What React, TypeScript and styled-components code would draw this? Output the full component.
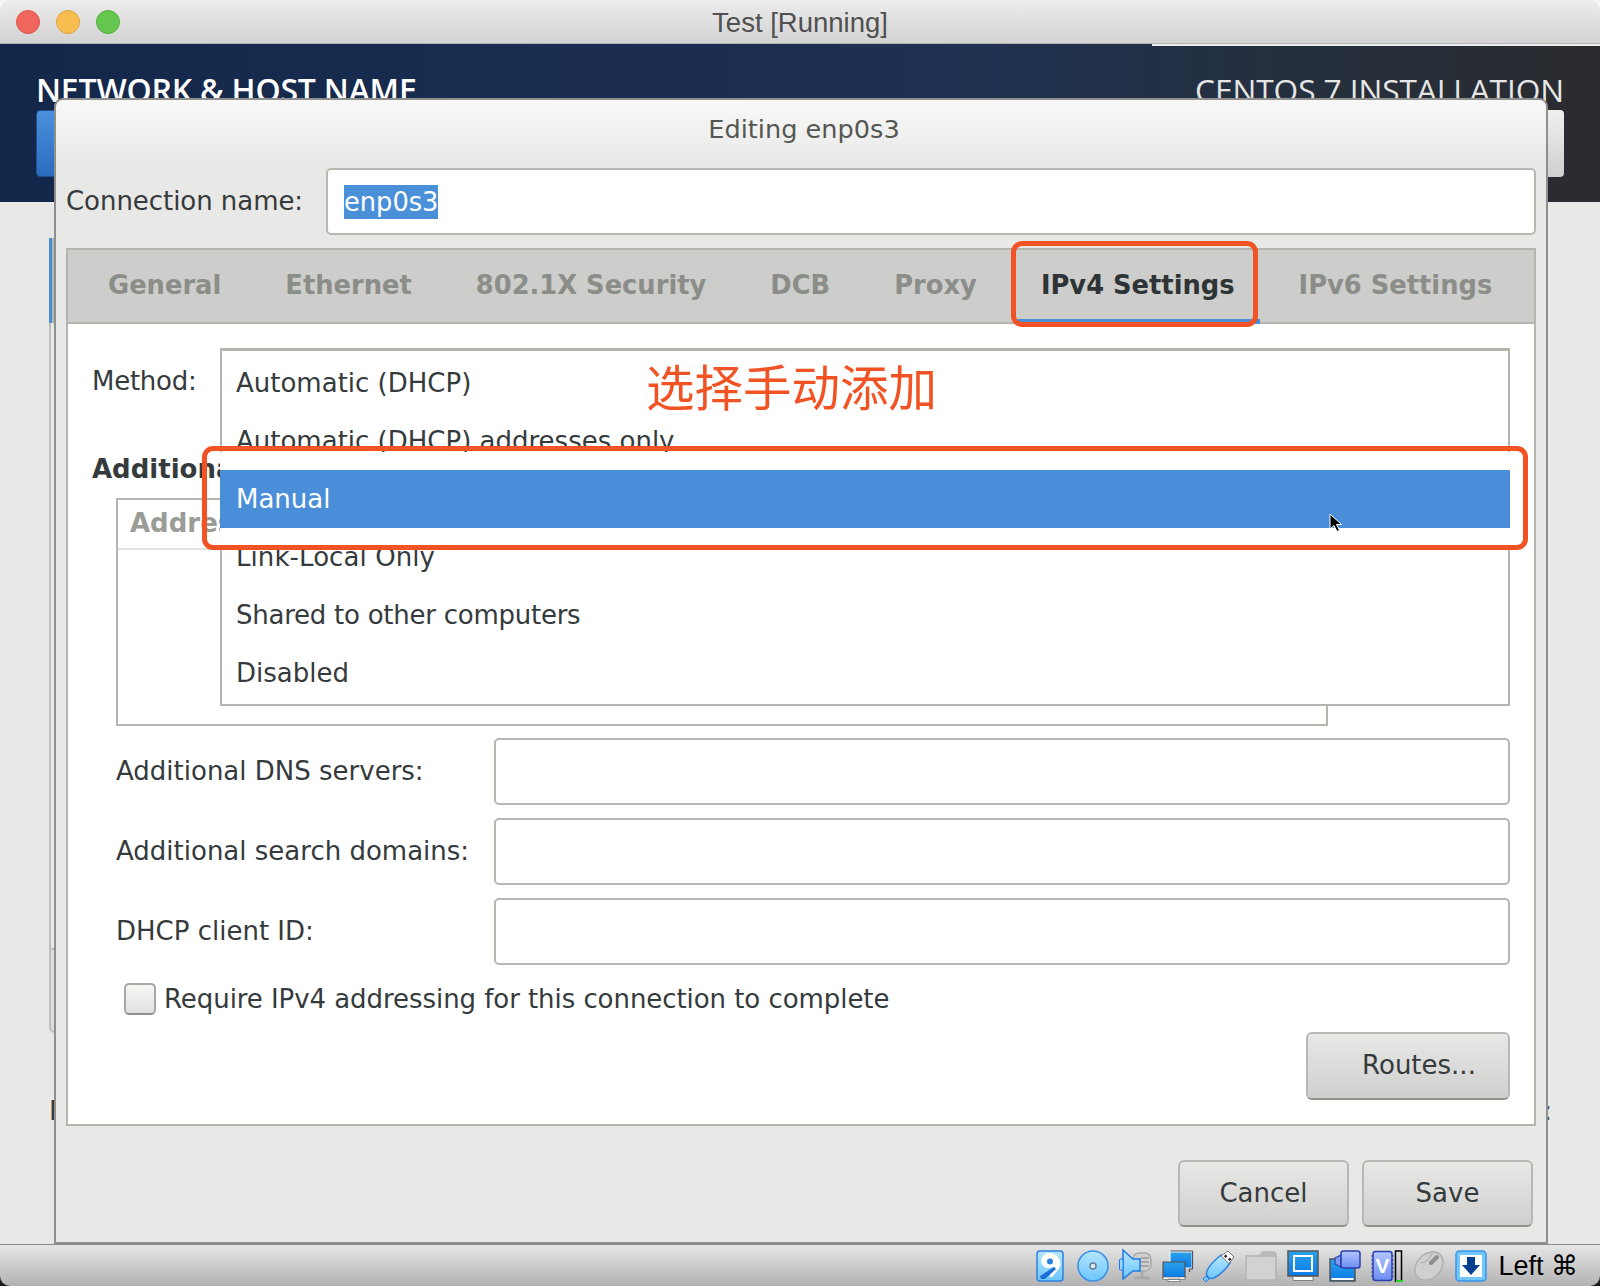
import React from "react";
import styled, { createGlobalStyle } from "styled-components";

const Global = createGlobalStyle`
  html, body { margin: 0; padding: 0; background: #fff; }
  #root { width: 1600px; height: 1286px; }
`;

const UI = `"DejaVu Sans", "Noto Sans", sans-serif`;
const INK = "#353a3c";

const Corners = styled.div`
  width: 1600px;
  height: 1286px;
  position: relative;
  overflow: hidden;
  background: linear-gradient(#f6f6f6 50%, #1c1c1c 50%);
`;
const Frame = styled.div`
  height: 100%;
  border-radius: 10px;
  overflow: hidden;
  display: flex;
  flex-direction: column;
`;
const WindowBar = styled.header`
  height: 44px;
  flex: none;
  box-sizing: border-box;
  position: relative;
  display: flex;
  align-items: center;
  justify-content: center;
  background: linear-gradient(#ececec, #d3d3d3);
  border-bottom: 1px solid #b4b4b4;
`;
const Lights = styled.div`
  position: absolute;
  left: 16px;
  top: 10px;
  display: flex;
  gap: 16px;
`;
const Light = styled.span<{ $fill: string; $edge: string }>`
  width: 24px;
  height: 24px;
  border-radius: 50%;
  box-sizing: border-box;
  background: ${(p) => p.$fill};
  border: 1px solid ${(p) => p.$edge};
`;
const WindowTitle = styled.div`
  font: 27.5px/30px "Liberation Sans", sans-serif;
  color: #505050;
  position: relative;
  top: 1px;
`;
const Desktop = styled.main`
  flex: 1;
  min-height: 0;
  position: relative;
  display: flex;
  flex-direction: column;
  background: #e8e8e7;
`;
const InstallerHeader = styled.div`
  height: 158px;
  flex: none;
  box-sizing: border-box;
  position: relative;
  padding: 28px 36px 0 36px;
  background: linear-gradient(90deg, #13274a 0%, #182c50 30%, #1e3152 60%, #25303f 80%, #2a2b2e 100%);
  &::before {
    content: "";
    position: absolute;
    left: 1152px;
    right: 0;
    top: 0;
    height: 2px;
    background: #ececec;
  }
`;
const HeaderRow = styled.div`
  display: flex;
  justify-content: space-between;
  align-items: flex-start;
`;
const ScreenName = styled.div`
  font: 600 32px/36px "Open Sans", sans-serif;
  color: #fff;
  letter-spacing: -0.2px;
`;
const ProductName = styled.div`
  font: 400 31.7px/36px "Open Sans", sans-serif;
  color: #e6e6e6;
  letter-spacing: -0.1px;
`;
const HeaderButtons = styled(HeaderRow)`
  margin-top: 2px;
`;
const DoneButton = styled.div`
  width: 100px;
  height: 67px;
  box-sizing: border-box;
  border-radius: 4px;
  background: linear-gradient(#4a90dc, #2a6dbd);
  border: 1px solid #1d4f8e;
`;
const KeyboardButton = styled.div`
  width: 120px;
  height: 67px;
  box-sizing: border-box;
  border-radius: 4px;
  background: linear-gradient(#f0f0ef, #cfcfcd);
`;
const BackPanel = styled.div`
  flex: 1;
  display: flex;
  flex-direction: column;
  padding: 36px 48px 0 49px;
`;
const BackSelected = styled.div`
  height: 85px;
  width: 6px;
  box-sizing: border-box;
  border-left: 3px solid #4a8dd8;
  border-right: 3px solid #b5b5b0;
`;
const BackLine = styled.div`
  height: 625px;
  width: 6px;
  box-sizing: border-box;
  border-left: 2px solid #bdbdb9;
`;
const BackBox = styled.div`
  height: 85px;
  width: 12px;
  box-sizing: border-box;
  border: 2px solid #bdbdb9;
  border-radius: 0 0 0 6px;
  background: #dededc;
`;
const BackFooter = styled.div`
  margin-top: 65px;
  display: flex;
  justify-content: space-between;
  font: 26px/26px ${UI};
  color: ${INK};
`;
const Dialog = styled.section`
  position: absolute;
  left: 54px;
  top: 54px;
  width: 1494px;
  height: 1146px;
  box-sizing: border-box;
  border: 2px solid #8f8f8d;
  border-radius: 9px 9px 0 0;
  background: #e8e8e7;
  display: flex;
  flex-direction: column;
  font-family: ${UI};
  color: ${INK};
`;
const DialogTitle = styled.div`
  height: 68px;
  flex: none;
  box-sizing: border-box;
  padding: 11px 0 0 6px;
  text-align: center;
  font-size: 25.6px;
  line-height: 36px;
  color: #555753;
  border-radius: 7px 7px 0 0;
  background: linear-gradient(#f8f8f8, #e8e8e7);
`;
const ConnectionRow = styled.div`
  display: flex;
  align-items: center;
  padding: 0 10px 0 10px;
`;
const ConnectionLabel = styled.label`
  width: 260px;
  flex: none;
  font-size: 26px;
  line-height: 34px;
  letter-spacing: -0.05px;
  margin-top: -2px;
`;
const Entry = styled.div`
  flex: 1;
  height: 67px;
  box-sizing: border-box;
  background: #fff;
  border: 2px solid #b8b8b3;
  border-radius: 5px;
  display: flex;
  align-items: center;
  padding-left: 16px;
  font-size: 25.7px;
`;
const Selected = styled.span`
  background: #4a90d9;
  color: #fff;
  line-height: 34px;
`;
const Notebook = styled.div`
  margin: 13px 10px 0 10px;
  height: 878px;
  box-sizing: border-box;
  border: 2px solid #b5b5b0;
  background: #fff;
  display: flex;
  flex-direction: column;
`;
const TabStrip = styled.nav`
  height: 74px;
  flex: none;
  box-sizing: border-box;
  display: flex;
  padding-left: 8px;
  background: #cdcdcb;
  border-bottom: 2px solid #b5b5b0;
`;
const Tab = styled.div<{ $active?: boolean }>`
  position: relative;
  padding: 0 32px;
  font-size: 25.75px;
  font-weight: 700;
  line-height: 70px;
  color: ${(p) => (p.$active ? "#2e3436" : "#8b8d89")};
  white-space: nowrap;
  &::after {
    content: "";
    display: ${(p) => (p.$active ? "block" : "none")};
    position: absolute;
    left: 7px;
    right: 7px;
    bottom: -2px;
    height: 5px;
    background: #4a90d9;
  }
`;
const Pane = styled.div`
  flex: 1;
  position: relative;
  padding: 40px 24px 0 24px;
  display: flex;
  flex-direction: column;
  font-size: 26px;
  line-height: 34px;
`;
const MethodLabel = styled.div`
  letter-spacing: -0.25px;
`;
const SectionHeading = styled.div`
  margin-top: 54px;
  font-weight: 700;
`;
const AddressTable = styled.div`
  margin: 12px 0 -1px 24px;
  width: 1212px;
  height: 228px;
  box-sizing: border-box;
  border: 2px solid #b5b5b0;
`;
const TableHead = styled.div`
  height: 50px;
  box-sizing: border-box;
  padding: 6px 0 0 12px;
  font-weight: 700;
  color: #9a9c98;
  border-bottom: 2px solid #e3e3e1;
`;
const FieldRow = styled.div`
  margin: 13px 0 0 24px;
  display: flex;
  align-items: center;
  height: 67px;
`;
const FieldLabel = styled.label`
  width: 378px;
  flex: none;
  margin-top: -2px;
`;
const FieldEntry = styled(Entry)``;
const CheckRow = styled.div`
  margin: 17px 0 0 32px;
  display: flex;
  align-items: center;
  gap: 8px;
`;
const CheckText = styled.span`
  letter-spacing: -0.06px;
`;
const CheckBox = styled.span`
  width: 32px;
  height: 32px;
  box-sizing: border-box;
  border: 2px solid #a9a9a4;
  border-bottom-color: #8f8f8b;
  border-radius: 5px;
  background: linear-gradient(#f6f6f5, #e0e0de);
`;
const Button = styled.div<{ $shift?: number }>`
  width: 171px;
  height: 67px;
  box-sizing: border-box;
  border: 2px solid #b8b8b3;
  border-bottom-color: #92928d;
  border-radius: 6px;
  background: linear-gradient(#e8e8e7, #cfcfcd);
  display: flex;
  align-items: center;
  justify-content: center;
  padding: 0 0 2px ${(p) => p.$shift ?? 0}px;
  font-size: 26px;
  color: ${INK};
`;
const RoutesButton = styled(Button)`
  width: 204px;
  height: 68px;
  margin: 16px 0 0 auto;
`;
const DialogActions = styled.div`
  display: flex;
  justify-content: flex-end;
  gap: 13px;
  padding: 34px 13px 0 0;
`;
const Popup = styled.div`
  position: absolute;
  left: 152px;
  top: 24px;
  width: 1290px;
  height: 358px;
  box-sizing: border-box;
  padding-top: 3px;
  background: #fff;
  border: 2px solid #b5b5b0;
  border-top-width: 3px;
  display: flex;
  flex-direction: column;
`;
const PopupItem = styled.div<{ $track?: number }>`
  height: 58px;
  flex: none;
  box-sizing: border-box;
  padding-left: 14px;
  line-height: 58px;
  letter-spacing: ${(p) => p.$track ?? 0}px;
`;
const HighlightBand = styled.div`
  position: relative;
  z-index: 1;
  margin: -18px -2px -17px -2px;
  padding: 18px 0 17px;
  background: #fff;
`;
const HighlightItem = styled(PopupItem)`
  padding-left: 16px;
  background: #4a8dd8;
  color: #fff;
`;
const Cursor = styled.svg`
  position: absolute;
  left: 1109px;
  top: 61px;
`;
const RedBox = styled.div<{ $x: number; $y: number; $w: number; $h: number }>`
  position: absolute;
  left: ${(p) => p.$x}px;
  top: ${(p) => p.$y}px;
  width: ${(p) => p.$w}px;
  height: ${(p) => p.$h}px;
  box-sizing: border-box;
  border: 5px solid #f15325;
  border-radius: 11px;
`;
const Annotation = styled.div`
  position: absolute;
  left: 646px;
  top: 355px;
  font: 48.5px/60px "Noto Sans CJK SC", sans-serif;
  color: #f15325;
  white-space: nowrap;
`;
const StatusBar = styled.footer`
  height: 42px;
  flex: none;
  box-sizing: border-box;
  display: flex;
  align-items: center;
  justify-content: flex-end;
  gap: 10px;
  padding-right: 22px;
  background: linear-gradient(#e6e6e6, #b2b2b2);
  border-top: 1px solid #8a8a88;
`;
const HostKey = styled.div`
  margin-left: 1px;
  font: 27px/30px "Liberation Sans", "DejaVu Sans", sans-serif;
  color: #000;
  white-space: nowrap;
`;
const Icon = styled.svg`
  flex: none;
  display: block;
  overflow: visible;
`;
const ChipLetter = styled.text`
  font: 700 21px "Liberation Sans", sans-serif;
  fill: #fff;
`;

const IconDefs = () => (
  <svg width="0" height="0" style={{ position: "absolute" }}>
    <defs>
      <linearGradient id="lb" x1="0" y1="0" x2="0" y2="1">
        <stop offset="0" stopColor="#b5e6ff" />
        <stop offset="1" stopColor="#6cc6ff" />
      </linearGradient>
      <linearGradient id="mb" x1="0" y1="0" x2="0" y2="1">
        <stop offset="0" stopColor="#2aa2ea" />
        <stop offset="1" stopColor="#0a7ae8" />
      </linearGradient>
      <linearGradient id="pb" x1="0" y1="0" x2="0" y2="1">
        <stop offset="0" stopColor="#b3c6ff" />
        <stop offset="1" stopColor="#6d8df0" />
      </linearGradient>
    </defs>
  </svg>
);

const IconSet = () => (
  <>
    <Icon width="32" height="32" viewBox="0 0 32 32">
      <rect x="2" y="1" width="26" height="30" rx="3" fill="url(#lb)" stroke="#2f80e0" strokeWidth="1.5" />
      <path d="M15 3.500a10 10 0 0 1 9 15L17 27h-3l6-10-6 1a7.500 7.500 0 0 1-8-7 8.500 8.500 0 0 1 9-8z" fill="#fff" />
      <circle cx="15" cy="11.500" r="3" fill="#2c7fe0" />
      <path d="M5 26l14-9 2 2-11 10H6z" fill="#1d6fd6" />
    </Icon>
    <Icon width="32" height="32" viewBox="0 0 32 32">
      <circle cx="16" cy="16" r="15" fill="url(#lb)" stroke="#3a8fec" strokeWidth="1.5" />
      <circle cx="16" cy="16" r="3" fill="#d8ecf8" stroke="#6b7f8f" strokeWidth="1.500" />
    </Icon>
    <Icon width="32" height="32" viewBox="0 0 32 32">
      <rect x="14" y="3" width="18" height="18" rx="6" fill="#cfcfcf" stroke="#a8a8a8" strokeWidth="1.500" />
      <path d="M22 8h8M22 12h8M22 16h8" stroke="#9a9a9a" strokeWidth="1.500" />
      <path d="M23 21v6M15 28h16" stroke="#a8a8a8" strokeWidth="3" />
      <path d="M4 0l10 9h7v12h-7L4 29z" fill="url(#lb)" stroke="#1f7ae6" strokeWidth="1.500" />
      <rect x="0.500" y="9" width="3.500" height="11" rx="1" fill="#9ad8ff" stroke="#1f7ae6" />
    </Icon>
    <Icon width="32" height="32" viewBox="0 0 32 32">
      <path d="M9 2h22v16H9z" fill="url(#mb)" stroke="#fff" strokeWidth="1" />
      <path d="M9.500 1h22v18h-3v3" fill="none" stroke="#555" strokeWidth="1.200" />
      <path d="M2 12h22v16H2z" fill="url(#mb)" stroke="#555" strokeWidth="1.200" />
      <path d="M2 27h22v2.500H2zM7 29h12v2.500H7z" fill="#fff" stroke="#555" strokeWidth="0.600" />
    </Icon>
    <Icon width="32" height="32" viewBox="0 0 32 32">
      <path d="M4 21C6 15 13 9 18 5l9 8c-4 6-10 12-16 15-5 2-9-2-7-7z" fill="url(#lb)" stroke="#2f80e0" strokeWidth="1.500" />
      <path d="M18 6l7-5 6 6-5 6.500z" fill="#fff" stroke="#777" strokeWidth="1" />
      <rect x="21.500" y="5" width="2.500" height="2.500" fill="#222" transform="rotate(45 22.700 6.200)" />
      <rect x="25.500" y="8" width="2.500" height="2.500" fill="#222" transform="rotate(45 26.700 9.200)" />
      <path d="M3 26l3 3-3 3-3-3z" fill="#6cc6ff" stroke="#2f80e0" />
    </Icon>
    <Icon width="32" height="32" viewBox="0 0 32 32">
      <path d="M1 6h13l4-4h11l2 2v26H1z" fill="#d2d2d2" stroke="#b2b2b2" strokeWidth="1.500" />
      <path d="M14 6h17" stroke="#b2b2b2" strokeWidth="1.500" />
      <path d="M18 2h11l2 4H14z" fill="#b9b9b9" />
    </Icon>
    <Icon width="32" height="32" viewBox="0 0 32 32">
      <rect x="1" y="1" width="30" height="25" fill="url(#mb)" stroke="#555" strokeWidth="1.500" />
      <rect x="7" y="6" width="18" height="15" fill="none" stroke="#fff" strokeWidth="2" />
      <path d="M6 26.500h20v4H6z" fill="#fff" stroke="#666" strokeWidth="0.800" />
    </Icon>
    <Icon width="32" height="32" viewBox="0 0 32 32">
      <rect x="1" y="9" width="25" height="22" fill="url(#mb)" stroke="#555" strokeWidth="1.500" />
      <rect x="2.500" y="28" width="22" height="2" fill="#fff" />
      <path d="M6 8l6-3v12l-6-3z" fill="#7f9cf4" stroke="#2b3fb0" strokeWidth="1.200" />
      <rect x="12" y="1" width="19" height="17" rx="2.500" fill="url(#pb)" stroke="#2b3fb0" strokeWidth="1.500" />
    </Icon>
    <Icon width="32" height="32" viewBox="0 0 32 32">
      <rect x="2" y="1.500" width="19" height="29" rx="2.500" fill="url(#pb)" stroke="#2b3fb0" strokeWidth="1.500" />
      <ChipLetter x="11.500" y="23" textAnchor="middle">V</ChipLetter>
      <path d="M21.500 5v22M1.500 5v22" stroke="#3a50c0" strokeWidth="2" strokeDasharray="2 2" />
      <rect x="24.500" y="1" width="6" height="30" fill="none" stroke="#000" strokeWidth="1.500" />
      <rect x="25" y="30" width="7" height="2" fill="#22d322" />
    </Icon>
    <Icon width="32" height="32" viewBox="0 0 32 32">
      <ellipse cx="16" cy="16" rx="12" ry="16" transform="rotate(45 16 16)" fill="#d0d0d0" stroke="#b0b0b0" strokeWidth="1.500" />
      <path d="M7 13c5 0 10-4 12-10" fill="none" stroke="#b0b0b0" strokeWidth="1.200" />
      <path d="M18 13l6-6" stroke="#8e8e8e" strokeWidth="4" strokeLinecap="round" />
    </Icon>
    <Icon width="32" height="32" viewBox="0 0 32 32">
      <rect x="1" y="1" width="30" height="30" rx="3.500" fill="#72c8fb" stroke="#3a94ea" strokeWidth="1.500" />
      <rect x="5" y="5" width="22" height="22" fill="#fff" />
      <path d="M12 7h8v8h5l-9 10-9-10h5z" fill="#053f8f" />
    </Icon>
  </>
);

export default function App() {
  return (
    <>
      <Global />
      <IconDefs />
      <Corners>
        <Frame>
          <WindowBar>
            <Lights>
              <Light $fill="#f0665c" $edge="#dd5348" />
              <Light $fill="#f7be4f" $edge="#dfa23a" />
              <Light $fill="#64c64f" $edge="#50ad3d" />
            </Lights>
            <WindowTitle>Test [Running]</WindowTitle>
          </WindowBar>
          <Desktop>
            <InstallerHeader>
              <HeaderRow>
                <ScreenName>NETWORK &amp; HOST NAME</ScreenName>
                <ProductName>CENTOS 7 INSTALLATION</ProductName>
              </HeaderRow>
              <HeaderButtons>
                <DoneButton />
                <KeyboardButton />
              </HeaderButtons>
            </InstallerHeader>
            <BackPanel>
              <BackSelected />
              <BackLine />
              <BackBox />
              <BackFooter>
                <span>Host name:</span>
                <span>Current host name:</span>
              </BackFooter>
            </BackPanel>
            <Dialog>
              <DialogTitle>Editing enp0s3</DialogTitle>
              <ConnectionRow>
                <ConnectionLabel>Connection name:</ConnectionLabel>
                <Entry>
                  <Selected>enp0s3</Selected>
                </Entry>
              </ConnectionRow>
              <Notebook>
                <TabStrip>
                  <Tab>General</Tab>
                  <Tab>Ethernet</Tab>
                  <Tab>802.1X Security</Tab>
                  <Tab>DCB</Tab>
                  <Tab>Proxy</Tab>
                  <Tab $active>IPv4 Settings</Tab>
                  <Tab>IPv6 Settings</Tab>
                </TabStrip>
                <Pane>
                  <MethodLabel>Method:</MethodLabel>
                  <SectionHeading>Additional static addresses</SectionHeading>
                  <AddressTable>
                    <TableHead>Address</TableHead>
                  </AddressTable>
                  <FieldRow>
                    <FieldLabel>Additional DNS servers:</FieldLabel>
                    <FieldEntry />
                  </FieldRow>
                  <FieldRow>
                    <FieldLabel>Additional search domains:</FieldLabel>
                    <FieldEntry />
                  </FieldRow>
                  <FieldRow>
                    <FieldLabel>DHCP client ID:</FieldLabel>
                    <FieldEntry />
                  </FieldRow>
                  <CheckRow>
                    <CheckBox />
                    <CheckText>Require IPv4 addressing for this connection to complete</CheckText>
                  </CheckRow>
                  <RoutesButton $shift={22}>Routes...</RoutesButton>
                  <Popup>
                    <PopupItem>Automatic (DHCP)</PopupItem>
                    <PopupItem>Automatic (DHCP) addresses only</PopupItem>
                    <HighlightBand>
                      <HighlightItem>Manual</HighlightItem>
                      <Cursor width="14" height="20" viewBox="0 0 14 20">
                        <path d="M1 1v15l4-3.500 3 6 2.500-1.200-3-5.800h5z" fill="#000" stroke="#fff" strokeWidth="1" />
                      </Cursor>
                    </HighlightBand>
                    <PopupItem $track={0.08}>Link-Local Only</PopupItem>
                    <PopupItem $track={-0.25}>Shared to other computers</PopupItem>
                    <PopupItem>Disabled</PopupItem>
                  </Popup>
                </Pane>
              </Notebook>
              <DialogActions>
                <Button>Cancel</Button>
                <Button>Save</Button>
              </DialogActions>
            </Dialog>
          </Desktop>
          <StatusBar>
            <IconSet />
            <HostKey>Left ⌘</HostKey>
          </StatusBar>
        </Frame>
        <RedBox $x={1011} $y={241} $w={247} $h={86} />
        <RedBox $x={202} $y={446} $w={1326} $h={104} />
        <Annotation>选择手动添加</Annotation>
      </Corners>
    </>
  );
}
